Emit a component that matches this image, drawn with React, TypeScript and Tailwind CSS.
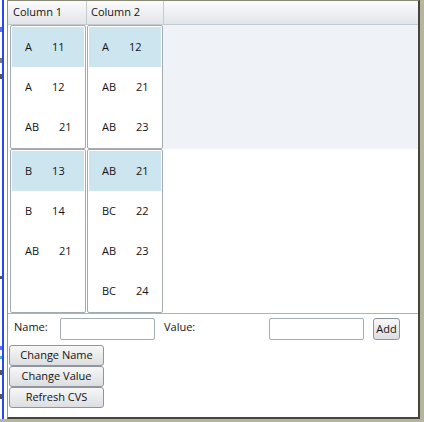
import React from "react";

const font = { fontFamily: '"Open Sans", "Noto Sans", sans-serif' };

function Row({ l, n, hi }: { l: string; n: string; hi?: boolean }) {
  return (
    <div className={`flex h-[40px] items-center pl-[13px] text-[11px] text-[#141414] ${hi ? "bg-[#cce5ee]" : ""}`}>
      <span>{l}</span>
      <span className="ml-[20px]">{n}</span>
    </div>
  );
}

function Card({ rows }: { rows: [string, string][] }) {
  return (
    <div className="flex w-[76px] flex-col rounded-[2px] border border-[#a2abb4] bg-white p-px">
      {rows.map((r, i) => (
        <Row key={i} l={r[0]} n={r[1]} hi={i === 0} />
      ))}
    </div>
  );
}

function Btn({ children, w }: { children: React.ReactNode; w: string }) {
  return (
    <div
      className={`flex h-[21px] ${w} items-center justify-center rounded-[3px] border border-[#8e959c] bg-gradient-to-b from-[#f7f7f7] to-[#dcdee1] text-[11px] text-[#141414]`}
    >
      {children}
    </div>
  );
}

function Mark({ top, h, color }: { top: string; h: string; color: string }) {
  return <div className={`absolute left-0 w-[2px] ${top} ${h} ${color}`} />;
}

export default function App() {
  return (
    <div className="flex h-[422px] w-[424px] flex-col bg-[#b5b59e]" style={font}>
      <div className="flex h-[419px]">
        {/* left strip */}
        <div className="relative flex h-full w-[7px] overflow-hidden bg-white">
          <Mark top="top-[27px]" h="h-[5px]" color="bg-[#5a70f0]" />
          <Mark top="top-[58px]" h="h-[5px]" color="bg-[#777]" />
          <Mark top="top-[74px]" h="h-[5px]" color="bg-[#555]" />
          <Mark top="top-[276px]" h="h-[3px]" color="bg-[#555]" />
          <Mark top="top-[346px]" h="h-[4px]" color="bg-[#5a70f0]" />
          <Mark top="top-[356px]" h="h-[3px]" color="bg-[#50b0d0]" />
          <Mark top="top-[370px]" h="h-[5px]" color="bg-[#555]" />
          <Mark top="top-[394px]" h="h-[5px]" color="bg-[#555]" />
          <div className="ml-[2px] h-full w-[2px] bg-[#2a48f0]" />
        </div>
        {/* window */}
        <div className="flex flex-1 flex-col border-b-2 border-l border-r-2 border-t border-b-[#45453c] border-l-[#8f969c] border-r-[#45453c] border-t-[#8a8a78] bg-white">
          {/* header */}
          <div className="flex h-[24px] border-b border-[#c4cad1] bg-gradient-to-b from-[#fbfbfb] to-[#e2e5e9] text-[11px] text-[#141414]">
            <div className="flex w-[79px] items-center border-r border-[#c6cbd0] pl-[5px]">Column 1</div>
            <div className="flex w-[77px] items-center border-r border-[#c6cbd0] pl-[4px]">Column 2</div>
            <div className="flex-1" />
          </div>
          {/* group 1 */}
          <div className="flex h-[124px] bg-white">
            <div className="flex gap-px pl-[2px]">
              <Card rows={[["A", "11"], ["A", "12"], ["AB", "21"]]} />
              <Card rows={[["A", "12"], ["AB", "21"], ["AB", "23"]]} />
            </div>
            <div className="flex-1 bg-[#eff3f8]" />
          </div>
          {/* group 2 */}
          <div className="flex h-[164px] bg-white">
            <div className="flex gap-px pl-[2px]">
              <Card rows={[["B", "13"], ["B", "14"], ["AB", "21"]]} />
              <Card rows={[["AB", "21"], ["BC", "22"], ["AB", "23"], ["BC", "24"]]} />
            </div>
            <div className="flex-1" />
          </div>
          <div className="h-px bg-[#a7b3bf]" />
          {/* form */}
          <div className="flex flex-col pt-[4px]">
            <div className="flex h-[22px] text-[11px] text-[#141414]">
              <div className="w-[52px] pl-[6px] pt-[1px]">Name:</div>
              <div className="h-[22px] w-[95px] rounded-[2px] border border-[#a3abb3] bg-white" />
              <div className="ml-[9px] w-[105px] pt-[1px]">Value:</div>
              <div className="h-[22px] w-[95px] rounded-[2px] border border-[#a3abb3] bg-white" />
              <div className="ml-[9px]">
                <Btn w="w-[27px] h-[22px]">Add</Btn>
              </div>
            </div>
            <div className="ml-[1px] mt-[5px] flex flex-col">
              <Btn w="w-[95px]">Change Name</Btn>
              <Btn w="w-[95px]">Change Value</Btn>
              <Btn w="w-[95px]">Refresh CVS</Btn>
            </div>
          </div>
        </div>
        <div className="w-[4px]" />
      </div>
    </div>
  );
}
